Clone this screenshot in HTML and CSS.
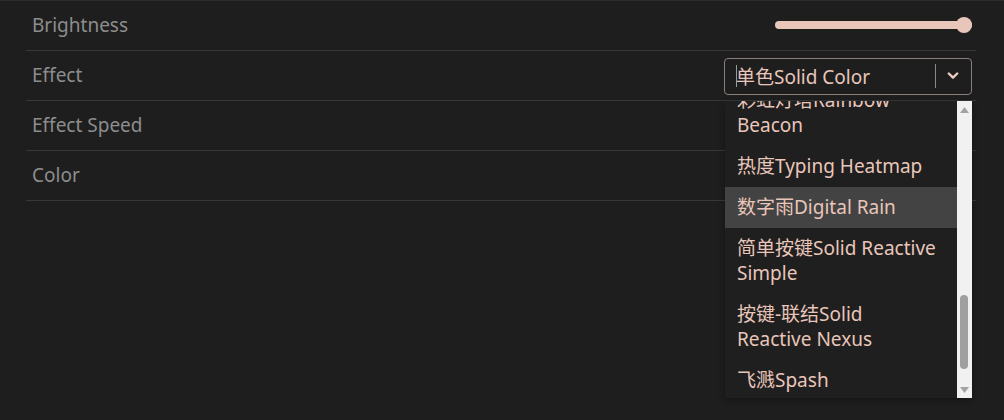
FILE: index.html
```html
<!DOCTYPE html>
<html lang="zh">
<head>
<meta charset="utf-8">
<link rel="stylesheet" href="styles.css">
</head>
<body>
<div class="panel">
  <div class="row">
    <span class="label">Brightness</span>
    <div class="slider"><div class="track"></div><div class="thumb"></div></div>
  </div>
  <div class="row">
    <span class="label">Effect</span>
    <div class="select">
      <span class="value"><span class="caret"></span>单色Solid Color</span>
      <span class="sep"></span>
      <svg class="chev" width="12" height="8" viewBox="0 0 12 8"><path d="M1.8 1.5 L6 5.7 L10.2 1.5" fill="none" stroke="#ecccc0" stroke-width="2.4" stroke-linecap="round" stroke-linejoin="round"/></svg>
    </div>
  </div>
  <div class="row"><span class="label">Effect Speed</span></div>
  <div class="row"><span class="label">Color</span></div>
</div>
<div class="menu">
  <div class="items">
    <div class="list">
      <div class="item">彩虹灯塔Rainbow Beacon</div>
      <div class="item">热度Typing Heatmap</div>
      <div class="item active">数字雨Digital Rain</div>
      <div class="item">简单按键Solid Reactive Simple</div>
      <div class="item">按键-联结Solid Reactive Nexus</div>
      <div class="item">飞溅Spash</div>
    </div>
  </div>
  <div class="scrollbar">
    <svg class="arrow" width="15" height="16" viewBox="0 0 15 16"><path d="M3 12 L7.5 6 L12 12 Z" fill="#a3a3a3"/></svg>
    <div class="sb-track"><div class="sb-thumb"></div></div>
    <svg class="arrow" width="15" height="16" viewBox="0 0 15 16"><path d="M3 5 L7.5 11 L12 5 Z" fill="#a3a3a3"/></svg>
  </div>
</div>
</body>
</html>
```
FILE: styles.css
```css
html, body {
  margin: 0;
  padding: 0;
}
body {
  background: #1e1e1e;
  width: 1004px;
  height: 420px;
  overflow: hidden;
  font-family: "Noto Sans", "Noto Sans CJK SC", sans-serif;
  font-size: 19px;
  border-top: 1px solid #2c2c2c;
  box-sizing: border-box;
}
.panel {
  margin: 0 28px 0 26px;
  display: flex;
  flex-direction: column;
}
.row {
  height: 50px;
  box-sizing: border-box;
  border-bottom: 1px solid #383838;
  display: flex;
  align-items: center;
  justify-content: space-between;
  padding: 0 4px 2px 6px;
}
.label {
  color: #8d8d8d;
  line-height: 24px;
}
.slider {
  position: relative;
  width: 197px;
  height: 16px;
  display: flex;
  align-items: center;
}
.track {
  flex: 1;
  height: 8px;
  border-radius: 4px;
  background: #e9c6ba;
}
.thumb {
  position: absolute;
  right: 0;
  top: 0;
  width: 16px;
  height: 16px;
  border-radius: 50%;
  background: #e9c6ba;
}
.select {
  width: 248px;
  height: 37px;
  box-sizing: border-box;
  border: 1px solid #8a7f7b;
  border-radius: 4px;
  display: flex;
  align-items: center;
  padding: 0 12px 0 11px;
  margin-top: 3px;
}
.value {
  flex: 1;
  color: #e9c6ba;
  display: flex;
  align-items: center;
}
.caret {
  width: 1px;
  height: 22px;
  background: #9a9a9a;
  margin-right: -1px;
}
.sep {
  width: 1px;
  height: 24px;
  background: #8a8a8a;
  margin-right: 11px;
}
.chev {
  display: block;
}
.menu {
  position: absolute;
  left: 725px;
  top: 101px;
  width: 247px;
  height: 297px;
  background: #1f1f1f;
  display: flex;
  box-shadow: 0 2px 6px rgba(0,0,0,0.35);
}
.items {
  flex: 1;
  overflow: hidden;
}
.list {
  margin-top: -21px;
}
.item {
  padding: 8px 18px 8px 12px;
  line-height: 25px;
  color: #e9c6ba;
}
.item.active {
  background: #434343;
}
.scrollbar {
  width: 15px;
  background: #f1f1f1;
  display: flex;
  flex-direction: column;
}
.arrow {
  display: block;
}
.sb-track {
  flex: 1;
  position: relative;
}
.sb-thumb {
  position: absolute;
  left: 3px;
  top: 178px;
  width: 8px;
  height: 74px;
  border-radius: 4px;
  background: #a0a0a0;
}
```
